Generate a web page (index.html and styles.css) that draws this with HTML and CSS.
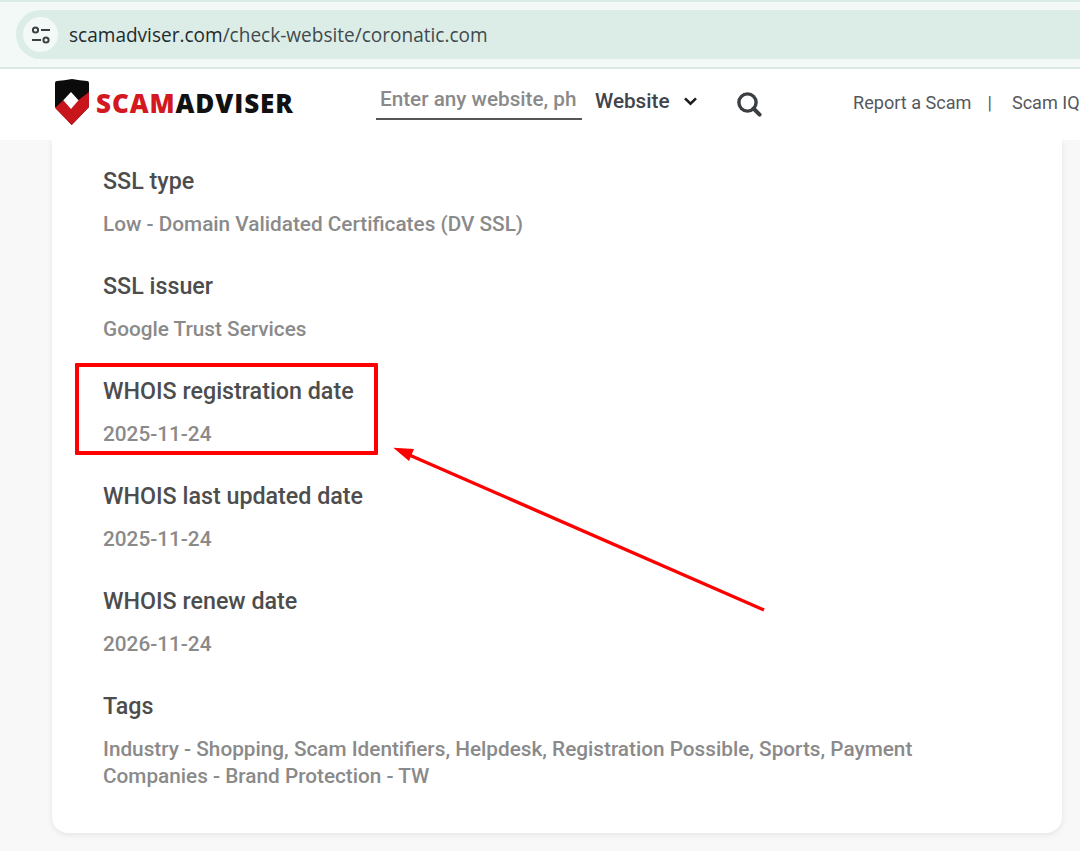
FILE: index.html
```html
<!DOCTYPE html>
<html lang="en">
<head>
<meta charset="utf-8">
<title>ScamAdviser</title>
<link rel="stylesheet" href="styles.css">
</head>
<body>
<div class="chrome">
  <div class="omnibox">
    <span class="tune">
      <svg width="22" height="22" viewBox="0 0 22 22" fill="none" stroke="#3c4043" stroke-width="2"><circle cx="5.5" cy="6" r="2.6"/><path d="M11 6h9"/><path d="M2 16h9"/><circle cx="16" cy="16" r="2.6"/></svg>
    </span>
    <span class="url">scamadviser.com<span class="url-path">/check-website/coronatic.com</span></span>
  </div>
</div>
<header class="site-header">
  <div class="logo">
    <svg class="shield" width="36" height="48" viewBox="0 0 36 48">
      <path d="M1 5 Q1 3.2 3 3 Q10 2.4 18 1 Q26 2.4 33 3 Q35 3.2 35 5 V29 L17.7 47 L1 29Z" fill="#0b0b0b"/>
      <path d="M1 30 L9.3 22.3 L24.3 22.3 L35 14 V29 L17.7 47 L1 30Z" fill="#c8151b"/>
      <path d="M17 14 L24.5 22.3 L17 31 L9.3 22.3Z" fill="#fff"/>
    </svg>
    <span class="wordmark"><span class="wm-red">SCAM</span>ADVISER</span>
  </div>
  <input class="search-field" type="text" placeholder="Enter any website, phone">
  <div class="select">Website
    <svg width="13" height="9" viewBox="0 0 13 9" fill="none" stroke="#1c1c1c" stroke-width="2.6"><path d="M1 1.4 6.5 6.6 12 1.4"/></svg>
  </div>
  <svg class="search-icon" width="26" height="26" viewBox="0 0 26 26" fill="none" stroke="#3b3f42"><circle cx="11.5" cy="11.5" r="8.6" stroke-width="3.4"/><path d="M17.5 17.5 23.6 23.6" stroke-width="4" stroke-linecap="round"/></svg>
  <nav class="nav">
    <a>Report a Scam</a><span class="sep">|</span><a>Scam IQ</a>
  </nav>
</header>
<main class="page">
  <section class="card">
    <div class="item"><h3>SSL type</h3><p>Low - Domain Validated Certificates (DV SSL)</p></div>
    <div class="item"><h3>SSL issuer</h3><p>Google Trust Services</p></div>
    <div class="item highlighted"><h3>WHOIS registration date</h3><p>2025-11-24</p></div>
    <div class="item"><h3>WHOIS last updated date</h3><p>2025-11-24</p></div>
    <div class="item"><h3>WHOIS renew date</h3><p>2026-11-24</p></div>
    <div class="item"><h3>Tags</h3><p>Industry - Shopping, Scam Identifiers, Helpdesk, Registration Possible, Sports, Payment Companies - Brand Protection - TW</p></div>
  </section>
</main>
<svg class="arrow" width="400" height="190" viewBox="0 0 400 190">
  <path d="M371 167 L14 11" stroke="#ff0000" stroke-width="3.4"/>
  <path d="M0.3 4.7 L21 6 L16 18Z" fill="#ff0000"/>
</svg>
</body>
</html>
```
FILE: styles.css
```css
* { box-sizing: border-box; }
html, body { margin: 0; padding: 0; }
body {
  width: 1080px;
  height: 851px;
  overflow: hidden;
  position: relative;
  background: #f8f8f8;
  font-family: Roboto, "Liberation Sans", sans-serif;
}
.chrome {
  height: 69px;
  background: #f3f9f7;
  border-top: 2px solid #dbece7;
  border-bottom: 2px solid #dbe9e5;
  padding-top: 8px;
  padding-left: 16px;
  overflow: hidden;
}
.omnibox {
  width: 1100px;
  height: 49px;
  background: #dcede8;
  border-radius: 25px 0 0 25px;
  display: flex;
  align-items: center;
  padding-left: 7px;
}
.tune {
  width: 35px;
  height: 35px;
  border-radius: 50%;
  background: #f3f9f7;
  display: flex;
  align-items: center;
  justify-content: center;
}
.url {
  margin-left: 11px;
  color: #1f2a2e;
  font-family: "Open Sans", Roboto, sans-serif;
  font-size: 19.05px;
}
.url-path { color: #414a4d; }
.site-header {
  height: 71px;
  background: #fff;
  display: flex;
  align-items: flex-start;
  position: relative;
}
.logo {
  display: flex;
  align-items: center;
  margin: 9px 0 0 54px;
  width: 322px;
}
.shield { flex: none; }
.wordmark {
  margin-left: 6px;
  margin-top: 1px;
  font-family: "Open Sans", sans-serif;
  font-weight: 800;
  font-size: 26px;
  letter-spacing: 0.9px;
  color: #111;
  white-space: nowrap;
}
.wm-red { color: #d4181f; }
.search-field {
  width: 206px;
  height: 51px;
  padding: 10px 5px 0 4px;
  border: 0;
  border-bottom: 2px solid #555;
  border-radius: 0;
  outline: 0;
  background: transparent;
  font-family: inherit;
  font-size: 20.7px;
  font-weight: 500;
}
.search-field::placeholder { color: #8a8a8a; opacity: 1; }
.select {
  margin: 20px 0 0 13px;
  width: 141px;
  font-size: 20.7px;
  font-weight: 500;
  color: #40444b;
  display: flex;
  align-items: center;
  gap: 14px;
}
.search-icon { margin-top: 22px; flex: none; }
.nav {
  position: absolute;
  left: 853px;
  top: 23px;
  font-size: 18.1px;
  color: #55585c;
  white-space: nowrap;
}
.sep { margin: 0 20px 0 16px; }
.page { padding: 0 18px 0 52px; }
.card {
  height: 693px;
  background: #fff;
  border-radius: 0 0 16px 16px;
  box-shadow: 0 2px 6px rgba(0,0,0,.08);
  padding: 27px 51px 0 51px;
}
.item { height: 105px; }
.item h3 {
  margin: 0;
  font-size: 23.28px;
  line-height: 29px;
  font-weight: 500;
  color: #4d4d4d;
}
.item p {
  margin: 15px 0 0;
  font-size: 20.75px;
  line-height: 27px;
  font-weight: 500;
  color: #8a8a8a;
}
.highlighted { position: relative; }
.highlighted::before {
  content: "";
  box-sizing: border-box;
  position: absolute;
  left: -28px;
  top: -14px;
  width: 303px;
  height: 92px;
  border: 4px solid #ff0000;
  border-radius: 1px;
}
.arrow {
  position: absolute;
  left: 393px;
  top: 443px;
}
```
